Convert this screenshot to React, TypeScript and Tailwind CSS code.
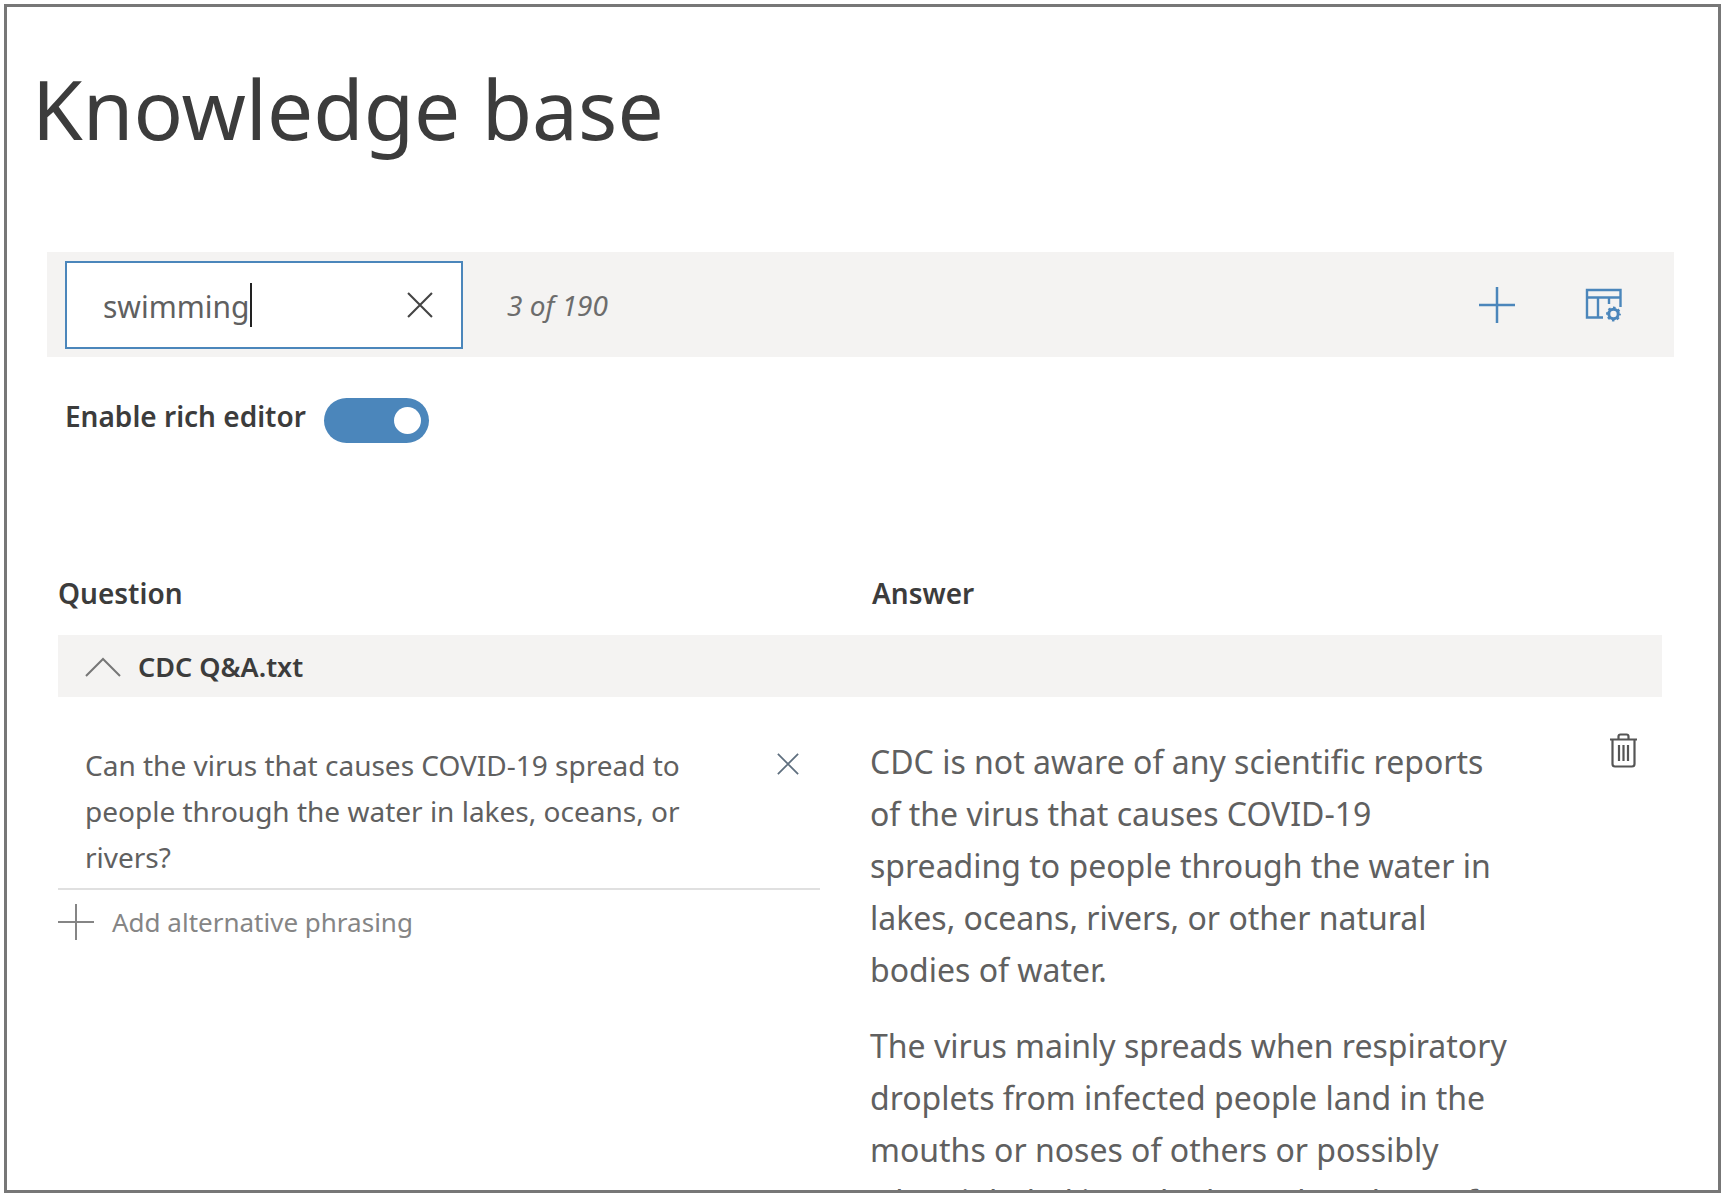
import { useState } from "react";

function CloseIcon({ className }: { className: string }) {
  return (
    <svg viewBox="0 0 25 25" className={className} fill="none" stroke="currentColor" aria-hidden="true">
      <path d="M1 1 24 24M24 1 1 24" />
    </svg>
  );
}

function PlusIcon({ className }: { className: string }) {
  return (
    <svg viewBox="0 0 36 36" className={className} fill="none" stroke="currentColor" aria-hidden="true">
      <path d="M18 0V36M0 18H36" />
    </svg>
  );
}

function TableSettingsIcon() {
  return (
    <svg viewBox="0 0 38 34" className="h-[34px] w-[38px]" fill="none" stroke="currentColor" strokeWidth="2.4" aria-hidden="true">
      <path d="M18 29.500H2V2H35.500V19M2 9.500H35.500M13 9.500V29.500M24 9.500V16" />
      <circle cx="28.500" cy="26" r="4.700" strokeWidth="3" />
      <circle cx="28.500" cy="26" r="6.500" strokeWidth="1.800" strokeDasharray="2.600 2.505" strokeDashoffset="1.300" />
    </svg>
  );
}

function TrashIcon() {
  return (
    <svg viewBox="0 0 27 35" className="h-[35px] w-[27px]" fill="none" stroke="currentColor" strokeWidth="2.2" aria-hidden="true">
      <path d="M0 6.500H27M8.500 6V3.500Q8.500 1.500 10.500 1.500H16.500Q18.500 1.500 18.500 3.500V6M2.500 6.500V31Q2.500 33.500 5 33.500H22Q24.500 33.500 24.500 31V6.500M9 12V28M13.500 12V28M18 12V28" />
    </svg>
  );
}

export default function App() {
  const [query, setQuery] = useState("swimming");
  const [rich, setRich] = useState(true);

  return (
    <div className="h-screen bg-white p-1 font-['Noto_Sans',sans-serif] text-[#606060]">
      <main className="h-full overflow-hidden border-[3px] border-[#777]">
        <h1 className="mt-[53px] ml-[25px] text-[82px] leading-[96px] text-[#3c3c3c]">Knowledge base</h1>

        <div className="mt-24 mr-11 ml-10 flex h-[105px] items-center bg-[#f4f3f2] pr-[51px] pl-[18px]">
          <div className="flex h-[88px] w-[398px] items-center border-2 border-[#4b86bb] bg-white pr-7 pl-9">
            <input
              type="text"
              aria-label="Search the knowledge base"
              value={query}
              onChange={(e) => setQuery(e.target.value)}
              className="field-sizing-content pt-1 text-[30px] leading-10 outline-none"
            />
            <span className="h-11 w-0.5 bg-[#222]" />
            <button type="button" aria-label="Clear search" onClick={() => setQuery("")} className="ml-auto text-[#444]">
              <CloseIcon className="size-[26px] stroke-2" />
            </button>
          </div>
          <p className="ml-11 text-[28px] leading-10 italic text-[#6c6c6c]">3 of 190</p>
          <button type="button" aria-label="Add question" className="ml-auto text-[#4b86bb]">
            <PlusIcon className="size-9 stroke-[2.5]" />
          </button>
          <button type="button" aria-label="Table settings" className="ml-[70px] text-[#4b86bb]">
            <TableSettingsIcon />
          </button>
        </div>

        <div className="mt-[39px] ml-[58px] flex items-start gap-[18px]">
          <label htmlFor="rich-editor" className="text-[28px] leading-10 font-semibold text-[#3c3c3c]">
            Enable rich editor
          </label>
          <input
            id="rich-editor"
            type="checkbox"
            role="switch"
            checked={rich}
            onChange={(e) => setRich(e.target.checked)}
            className="mt-0.5 flex h-[45px] w-[105px] appearance-none items-center rounded-full bg-gray-400 px-2 before:size-[27px] before:rounded-full before:bg-white before:content-[''] checked:justify-end checked:bg-[#4b86bb]"
          />
        </div>

        <div className="mt-[130px] mr-14 ml-[51px]">
          <table className="w-full table-fixed border-collapse text-left">
            <colgroup>
              <col className="w-[812px]" />
              <col />
              <col className="w-[100px]" />
            </colgroup>
            <thead>
              <tr className="text-[28px] leading-10 text-[#3c3c3c]">
                <th scope="col" className="pb-[22px] font-semibold">Question</th>
                <th scope="col" className="pb-[22px] pl-0.5 font-semibold">Answer</th>
                <td />
              </tr>
            </thead>
            <tbody>
              <tr>
                <th scope="rowgroup" colSpan={3} className="h-[62px] bg-[#f4f3f2] p-0 pl-[27px]">
                  <button type="button" aria-expanded="true" className="flex items-center gap-[17px] pt-0.5 text-[27px] leading-9 font-semibold text-[#3c3c3c]">
                    <svg viewBox="0 0 36 20" className="h-5 w-9 text-[#777]" fill="none" stroke="currentColor" strokeWidth="2" aria-hidden="true">
                      <path d="M1 19 18 2 35 19" />
                    </svg>
                    CDC Q&amp;A.txt
                  </button>
                </th>
              </tr>
              <tr className="align-top">
                <td className="pt-[45px] pr-[50px]">
                  <div className="flex items-start gap-[58px] border-b-2 border-[#e0e0e0] pr-[21px] pb-2 pl-[27px]">
                    <p className="flex-1 text-[28px] leading-[46px]">
                      Can the virus that causes COVID-19 spread to people through the water in lakes, oceans, or rivers?
                    </p>
                    <button type="button" aria-label="Remove question" className="mt-[11px] text-[#5f6f7f]">
                      <CloseIcon className="size-[22px] stroke-2" />
                    </button>
                  </div>
                  <button type="button" className="mt-3.5 flex items-center gap-[18px] text-[26px] leading-9 text-[#858585]">
                    <PlusIcon className="size-9 stroke-2" />
                    Add alternative phrasing
                  </button>
                </td>
                <td className="pt-[39px]">
                  <div className="max-w-[644px] text-[32px] leading-[52px]">
                    <p>
                      CDC is not aware of any scientific reports of the virus that causes COVID-19 spreading to people through the
                      water in lakes, oceans, rivers, or other natural bodies of water.
                    </p>
                    <p className="mt-6">
                      The virus mainly spreads when respiratory droplets from infected people land in the mouths or noses of others
                      or possibly when inhaled into the lungs by others. If
                    </p>
                  </div>
                </td>
                <td className="pt-9 pr-[25px] text-right">
                  <button type="button" aria-label="Delete pair" className="text-[#555]">
                    <TrashIcon />
                  </button>
                </td>
              </tr>
            </tbody>
          </table>
        </div>
      </main>
    </div>
  );
}
